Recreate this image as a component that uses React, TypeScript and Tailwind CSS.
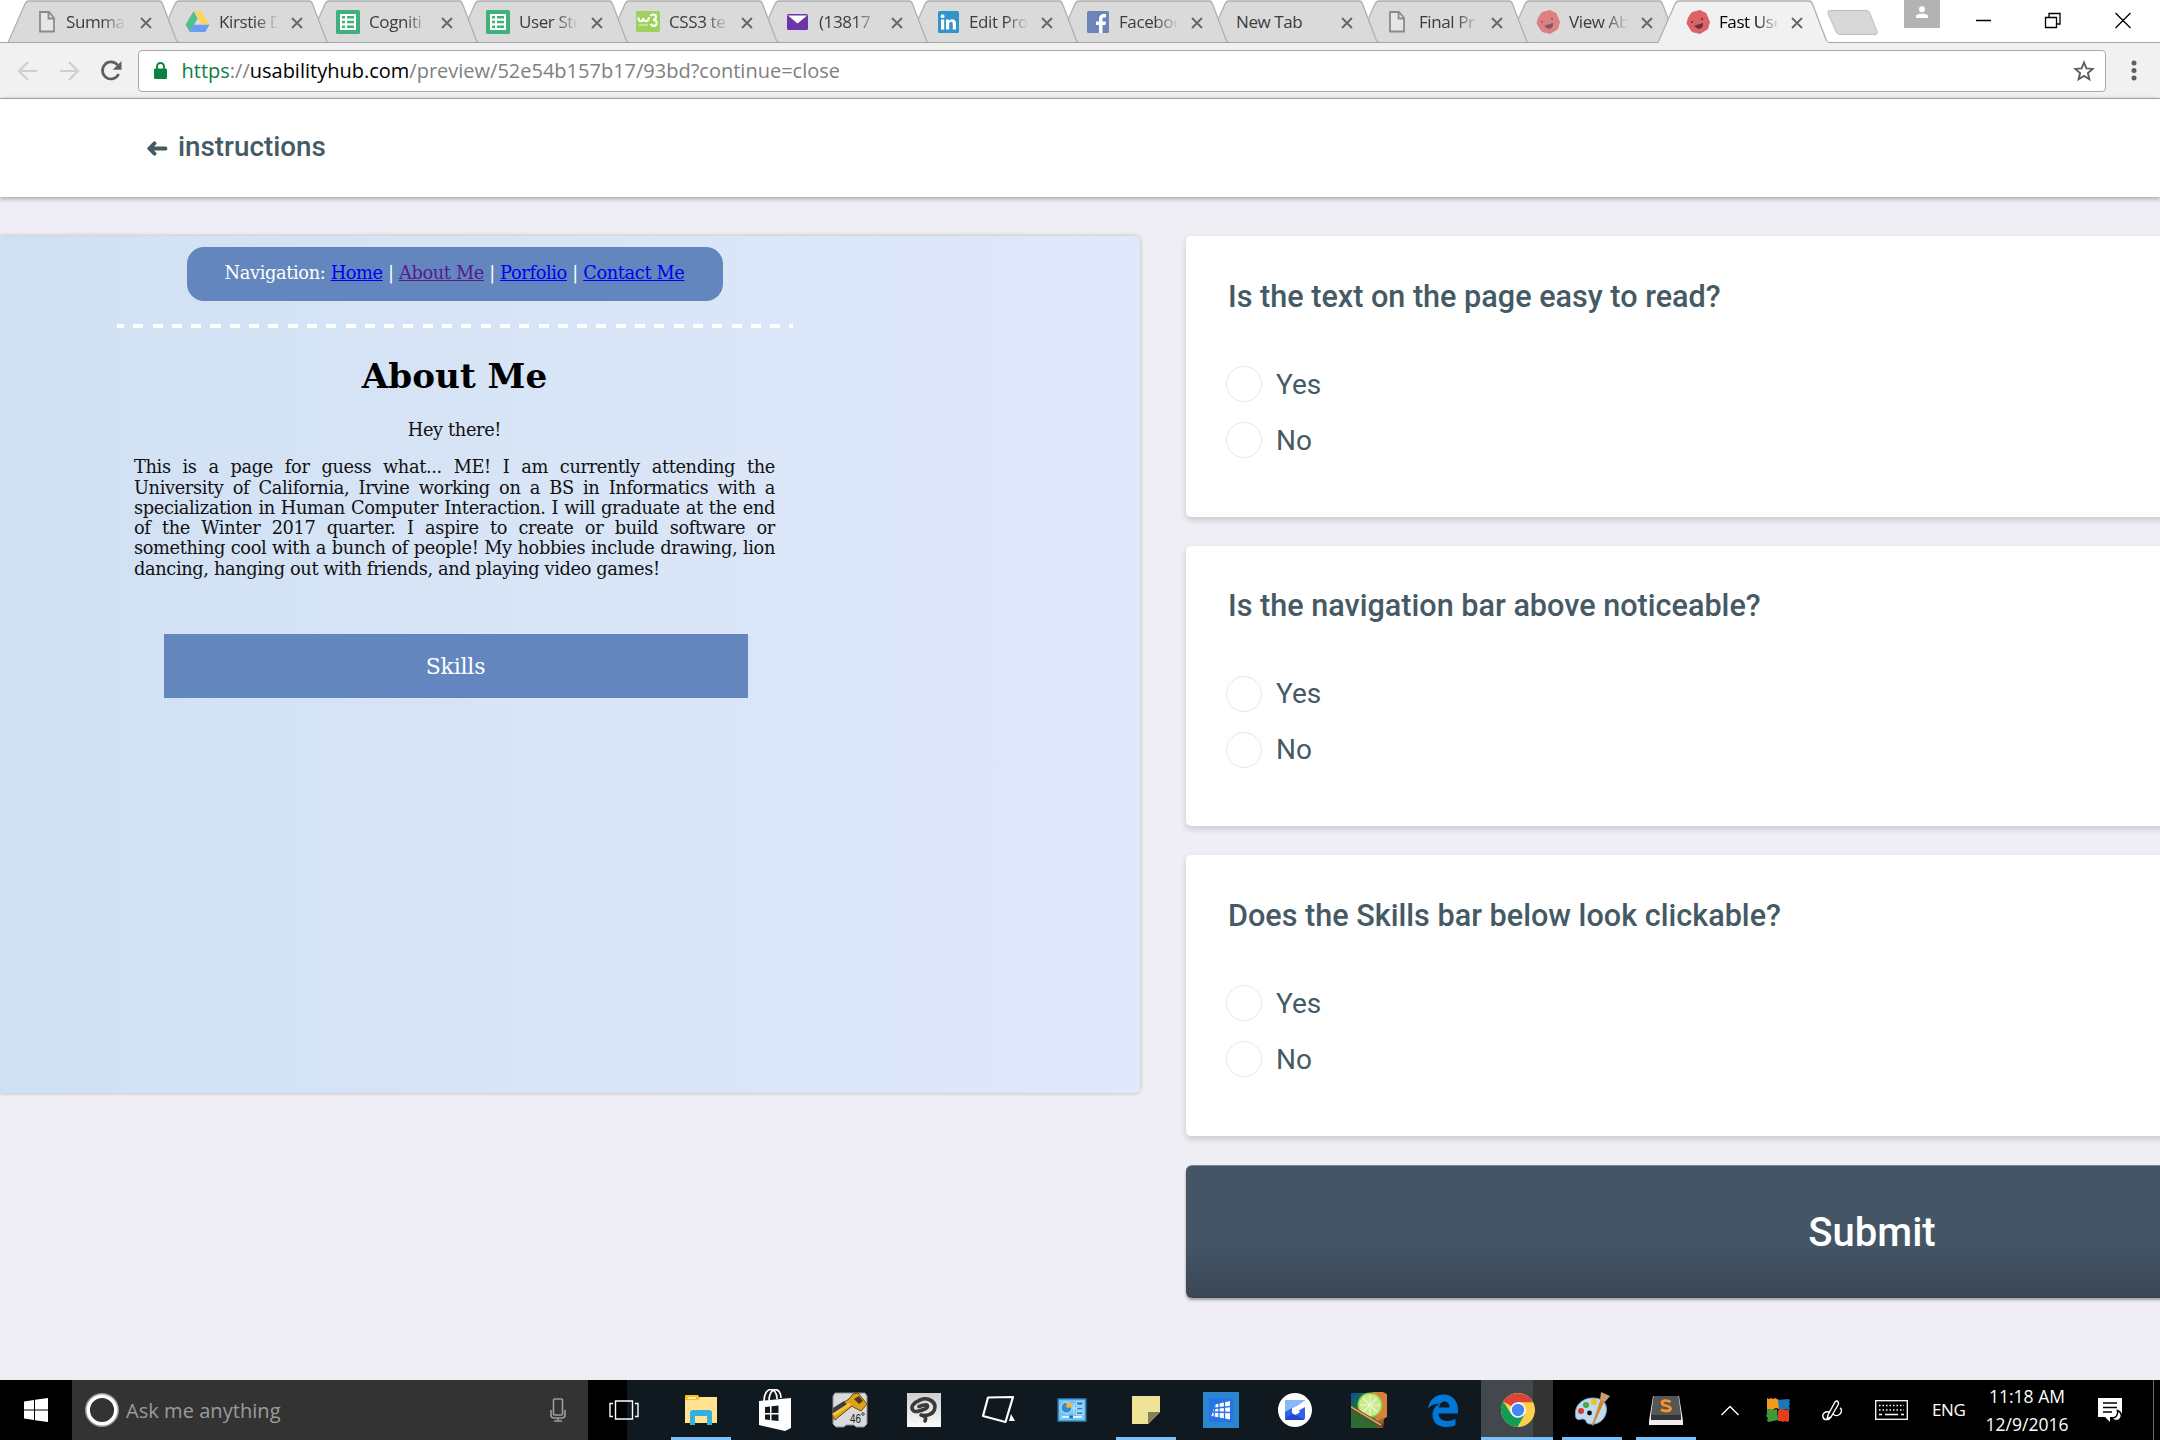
import React from "react";

type Tab = { title: string; icon?: React.ReactNode; dim?: boolean };

const FileIcon = () => (
  <svg className="-ml-[3px]" width="18" height="24" viewBox="0 0 18 24" fill="none" stroke="#8a8a8a" strokeWidth="1.800">
    <path d="M2 2h9l5 6v13.500H2z" fill="#e6e6e6" />
    <path d="M10.500 2v6.500H16" />
  </svg>
);
const DriveIcon = () => (
  <svg className="-ml-[2px]" width="25" height="23" viewBox="0 0 26 24">
    <path d="M9 1 0.500 15.500 5 23 13.200 8.500z" fill="#4fc08d" />
    <path d="M9 1h8l8.500 14.500h-8.200z" fill="#fdd464" />
    <path d="M5 23 9 15.500h16.500L21 23z" fill="#6b9cf4" />
  </svg>
);
const SheetIcon = () => (
  <svg width="24" height="24" viewBox="0 0 24 24">
    <rect width="24" height="24" rx="1.500" fill="#3fb27c" />
    <path d="M4 4h16v16H4z" fill="#fff" />
    <path d="M6 6h3v2.500H6zM11 6h7v2.500h-7zM6 10.700h3v2.500H6zM11 10.700h7v2.500h-7zM6 15.400h3v2.500H6zM11 15.400h7v2.500h-7z" fill="#3fb27c" />
  </svg>
);
const W3Icon = () => (
  <svg width="24" height="21" viewBox="0 0 24 21">
    <rect width="24" height="21" rx="1.500" fill="#9ed15d" />
    <path d="M2.500 6.500c0 5 4.500 5 4.700 .5 .3 4.500 5.300 4.500 5.800-1M14.500 5c2-2.500 6-1.500 5.500 1.200-.3 1.800-1.800 2.500-3 2.500 2.500 0 4 1.500 3.600 3.800-.6 3-4.600 3.200-6 .5" fill="none" stroke="#fff" strokeWidth="2.100" />
    <path d="M3 14h9" stroke="#d8efbf" strokeWidth="1.200" />
  </svg>
);
const MailIcon = () => (
  <svg className="-ml-[2px]" width="21" height="16" viewBox="0 0 21 16">
    <rect width="21" height="16" rx="1.500" fill="#6b34a8" />
    <path d="M1 1.500h19l-9.500 8z" fill="#fff" />
  </svg>
);
const LinkedInIcon = () => (
  <svg width="21" height="22" viewBox="0 0 21 22">
    <rect width="21" height="22" rx="1.500" fill="#3394c8" />
    <path d="M3 8.500h3.200V18.500H3zM8 8.500h3v1.400c1.700-2.500 7-2.200 7 2.600v6h-3.200v-5.300c0-3.200-3.600-3-3.600 0v5.300H8z" fill="#fff" />
    <circle cx="4.600" cy="5.200" r="1.900" fill="#fff" />
  </svg>
);
const FacebookIcon = () => (
  <svg width="22" height="22" viewBox="0 0 22 22">
    <rect width="22" height="22" rx="1.500" fill="#6d84b9" />
    <path d="M12 22v-8H9v-3.500h3V8c0-3.500 2-5 5-5h2v3.500h-1.500c-1.500 0-2 .6-2 1.800v2.200H19l-.6 3.500h-2.900v8z" fill="#fff" />
  </svg>
);
const FaceIcon = () => (
  <svg width="24" height="24" viewBox="0 0 24 24">
    <path d="M6 2.500 14 .5l6 3 3.500 8.500-2 7-7.500 4.500-8-2-5-8 1.500-6z" fill="#dd6266" stroke="#dd6266" strokeLinejoin="round" />
    <circle cx="6" cy="12" r="1" fill="#5d2c35" />
    <circle cx="16" cy="9" r="1" fill="#5d2c35" />
    <path d="M8.500 15.500l8.500-2.500c.5 3-1 5.500-3.500 5.800-2.300.2-4-1.200-5-3.300z" fill="#6b3038" />
  </svg>
);

const tabs: Tab[] = [
  { title: "Summa", icon: <FileIcon /> },
  { title: "Kirstie D", icon: <DriveIcon /> },
  { title: "Cogniti", icon: <SheetIcon /> },
  { title: "User Sto", icon: <SheetIcon /> },
  { title: "CSS3 te", icon: <W3Icon /> },
  { title: "(13817", icon: <MailIcon /> },
  { title: "Edit Pro", icon: <LinkedInIcon /> },
  { title: "Faceboo", icon: <FacebookIcon /> },
  { title: "New Tab" },
  { title: "Final Pr", icon: <FileIcon /> },
  { title: "View Ab", icon: <FaceIcon />, dim: true },
  { title: "Fast Use", icon: <FaceIcon /> },
];

function BrowserTab({ tab, active, layer }: { tab: Tab; active: boolean; layer: number }) {
  return (
    <div className="relative flex h-[43px] w-[150px] shrink-0 items-center" style={{ zIndex: layer }}>
      <svg className="absolute -left-3 top-0" width="176" height="43" viewBox="0 0 176 43">
        <path
          d="M0 42.500 L17 4 Q18.500 1 21 1 H151 Q153.500 1 154.500 4 L168 39.500 Q169 42.500 171 42.500"
          fill={active ? "#f1f1f1" : "#dadada"}
          stroke="#b0b0b0"
          strokeWidth="1.300"
        />
        <path d={active ? "M1 42.500H170" : "M0 42.500H171"} stroke={active ? "#f1f1f1" : "#a6a6a6"} strokeWidth={active ? 2 : 1} />
      </svg>
      <div className="relative flex h-full w-full items-center">
        {tab.icon && (
          <div className={`flex w-[49px] justify-center pl-[7px] ${tab.dim ? "opacity-75" : ""}`}>{tab.icon}</div>
        )}
        <div
          className={`whitespace-nowrap text-[17px] leading-[24px] tracking-[-0.4px] ${
            active ? "text-black" : "text-[#3c3c3c]"
          } ${
            tab.icon
              ? "w-[58px] [mask-image:linear-gradient(to_right,#000_36px,transparent_60px)] [mask-repeat:no-repeat]"
              : "ml-4 w-[91px]"
          } ${layer === 12 ? "-ml-[3px] mr-[2px]" : ""}`}
        >
          {tab.title}
        </div>
        <svg className="ml-[13.500px] mt-[2px]" width="12" height="12" viewBox="0 0 12 12" stroke="#666" strokeWidth="1.800">
          <path d="M1 1l10 10M11 1L1 11" />
        </svg>
      </div>
    </div>
  );
}

function TabStrip() {
  return (
    <div className="relative flex h-[43px] border-b border-[#a6a6a6] bg-white pl-[20px]">
      {tabs.map((t, i) => (
        <BrowserTab key={i} tab={t} active={i === tabs.length - 1} layer={i === tabs.length - 1 ? 20 : 12 - i} />
      ))}
      <svg className="ml-[6px] mt-[9px] shrink-0" width="54" height="27" viewBox="0 0 54 27">
        <path d="M4 1.500H40q3 0 4 3l7 18q1 3-2 3H14q-3 0-4-3L2 4.500q-1-3 2-3z" fill="#d8d8d8" stroke="#bdbdbd" />
      </svg>
      <div className="ml-[24px] flex h-[28px] w-[36px] shrink-0 justify-center bg-[#b3b3b3] pt-[6px]">
        <svg width="12" height="13" viewBox="0 0 12 13" fill="#fff">
          <circle cx="6" cy="3.200" r="3" />
          <path d="M0 12V9.500C2 7 10 7 12 9.500V12z" />
        </svg>
      </div>
      <svg className="ml-[36px] mt-[12px] shrink-0" width="157" height="18" viewBox="0 0 157 18" fill="none" stroke="#000" strokeWidth="1.300">
        <path d="M0 8.500H15M69.500 5.500h11v10h-11zM73 5V1.500h11v10.500h-3M139.500 1l15 15M154.500 1l-15 15" />
      </svg>
    </div>
  );
}

function Toolbar() {
  return (
    <div className="flex h-[56px] items-center border-b border-[#b4b4b4] bg-[#f1f1f1] pl-[17px]">
      <svg width="21" height="20" viewBox="0 0 21 20" fill="none" stroke="#cfcfcf" strokeWidth="2.200">
        <path d="M20 10H2M11 1L2 10l9 9" />
      </svg>
      <svg className="ml-[21px]" width="21" height="20" viewBox="0 0 21 20" fill="none" stroke="#cfcfcf" strokeWidth="2.200">
        <path d="M1 10H19M10 1l9 9-9 9" />
      </svg>
      <svg className="ml-[20px]" width="23" height="22" viewBox="0 0 23 22" fill="none">
        <path d="M17.500 5A8.500 8.500 0 1 0 18.700 14" stroke="#5e5e5e" strokeWidth="2.700" />
        <path d="M21.500 1v8.800h-8.800z" fill="#5e5e5e" />
      </svg>
      <div className="ml-[15px] flex h-[42px] w-[1968px] items-center rounded-[4px] border border-[#a9a9a9] bg-white pl-[15px] pr-[10px]">
        <svg width="13" height="18" viewBox="0 0 13 18">
          <rect y="6.500" width="13" height="10.500" rx="1.200" fill="#0b8043" />
          <path d="M3 7V4.500a3.500 3.500 0 0 1 7 0V7" fill="none" stroke="#0b8043" strokeWidth="1.900" />
        </svg>
        <div className="ml-[14.500px] whitespace-nowrap text-[20px] leading-[28px] text-[#808080]">
          <span className="text-[#0b8043]">https</span>://<span className="text-black">usabilityhub.com</span>
          /preview/52e54b157b17/93bd?continue=close
        </div>
        <svg className="ml-auto" width="22" height="22" viewBox="0 0 22 22" fill="none" stroke="#5e5e5e" strokeWidth="1.900">
          <path d="M11 2.500l2.400 5.900 6.300.5-4.800 4.100 1.500 6.200L11 15.900l-5.400 3.300 1.500-6.200L2.300 8.900l6.300-.5z" />
        </svg>
      </div>
      <svg className="ml-[25px]" width="6" height="21" viewBox="0 0 6 21" fill="#5e5e5e">
        <circle cx="3" cy="3" r="2.500" />
        <circle cx="3" cy="10.500" r="2.500" />
        <circle cx="3" cy="18" r="2.500" />
      </svg>
    </div>
  );
}

function AboutPage() {
  return (
    <div className="h-[857px] w-[1140px] shrink-0 rounded-r-[5px] bg-linear-to-r from-[#d0e0f3] via-[#d8e5f7] to-[#e0e8fb] pt-[11px] font-['DejaVu_Serif',serif] text-[17.800px] leading-[20.3px] tracking-[-0.370px] text-[#111] shadow-[0_0_4px_rgba(0,0,0,0.25)]">
      <div className="flex w-[909px] flex-col items-center">
        <div className="flex h-[54px] w-[536px] justify-center rounded-[17px] bg-[#6486be] pt-[15.500px] text-white">
          <span className="whitespace-nowrap">
            Navigation: <a className="text-[#0000ee] underline">Home</a> | <a className="text-[#551a8b] underline">About Me</a> |{" "}
            <a className="text-[#0000ee] underline">Porfolio</a> | <a className="text-[#0000ee] underline">Contact Me</a>
          </span>
        </div>
        <div className="mt-[23px] h-[3.500px] w-[676px] bg-[repeating-linear-gradient(to_right,#fff_0,#fff_10px,transparent_10px,transparent_19.3px)] bg-[position:-3px_0]" />
        <h1 className="mt-[28px] text-[34.2px] font-bold leading-[40px] tracking-normal text-black">About Me</h1>
        <p className="mt-[24px]">Hey there!</p>
        <p className="mt-[17.500px] w-[641px] text-justify">
          This is a page for guess what... ME! I am currently attending the University of California, Irvine working on a BS in
          Informatics with a specialization in Human Computer Interaction. I will graduate at the end of the Winter 2017 quarter. I
          aspire to create or build software or something cool with a bunch of people! My hobbies include drawing, lion dancing,
          hanging out with friends, and playing video games!
        </p>
        <div className="ml-[2px] mt-[55px] flex h-[64px] w-[584px] items-center justify-center bg-[#6486be] pt-[2px] text-[22px] tracking-[-0.200px] text-white">
          Skills
        </div>
      </div>
    </div>
  );
}

function Question({ text }: { text: string }) {
  return (
    <div className="h-[280.500px] rounded-[5px] bg-white pl-[40px] pt-[40.500px] shadow-[0_3px_6px_rgba(0,0,0,0.16)]">
      <h2 className="whitespace-nowrap pl-[2px] text-[30.600px] font-medium leading-[40px]">{text}</h2>
      <div className="mt-[49.500px] flex flex-col gap-[20px]">
        {["Yes", "No"].map((o) => (
          <label key={o} className="flex h-[36px] items-center gap-[14px] text-[28px] leading-[36px]">
            <span className="h-[36px] w-[36px] rounded-full border-[1.500px] border-[#e2e8ee]" />
            <span className="pt-[1px]">{o}</span>
          </label>
        ))}
      </div>
    </div>
  );
}

const ExplorerIcon = () => (
  <svg width="32" height="30" viewBox="0 0 32 30">
    <path d="M0 1q0-1 1-1h12l2 3v3H0z" fill="#fbbc24" />
    <path d="M3 3h8" stroke="#fff" strokeWidth="1.400" />
    <path d="M0 5h13l2-3h17v26H0z" fill="#ffe391" />
    <path d="M5 30V18q0-3 3-3h16q3 0 3 3v12h-5v-9H10v9z" fill="#35aee2" />
  </svg>
);
const StoreIcon = () => (
  <svg width="34" height="42" viewBox="0 0 34 42">
    <path d="M1 12l32-3v30l-6 3L1 36z" fill="#fff" />
    <path d="M6 12C6-3 19-3 19 10M11 11C12-3 23-2 23 9" fill="none" stroke="#fff" strokeWidth="1.700" />
    <path d="M7 18l5-.5v6.500H7zM13.500 17.200l7-.8V24h-7zM7 25.500h5V31l-5-.6zM13.500 25.500h7v6.600l-7-.9z" fill="#101820" />
  </svg>
);
const RulerIcon = () => (
  <svg width="36" height="36" viewBox="0 0 36 36">
    <path d="M3 1h30l2 3v28l-3 3h-8l-2-2h-8l-2 2H4l-3-3V4z" fill="#d9dadd" stroke="#8d8f93" />
    <path d="M1 17L17 7l4-5 5-1 9 11-6 7-6-3-3-2L3 28l-2-3z" fill="#e0a21b" stroke="#6e4a05" />
    <path d="M1 16l11-7 4 5L1 24z" fill="#3b3d40" />
    <path d="M1 23L18 12" stroke="#f7c545" strokeWidth="3" />
    <path d="M22 7l5-3 4 5-4 3z" fill="#4a3b1a" />
    <text x="18" y="31" fontSize="12" fontFamily="Liberation Sans, sans-serif" fill="#222" textLength="11" lengthAdjust="spacingAndGlyphs">46</text>
    <circle cx="31" cy="22" r="1.300" fill="none" stroke="#222" strokeWidth=".8" />
  </svg>
);
const ClipIcon = () => (
  <svg width="34" height="34" viewBox="0 0 34 34">
    <defs>
      <linearGradient id="clip" x2="0" y2="1">
        <stop stopColor="#cfcfcf" />
        <stop offset="1" stopColor="#fafafa" />
      </linearGradient>
    </defs>
    <rect width="34" height="34" fill="url(#clip)" />
    <path
      d="M5.500 12.500C10 7 17 4.500 22 6.500C31 10 29 20 21 22C18 22.800 15.500 22.500 14 22C17 23 20 24 18 28M5.500 12.500C3.500 17.500 8 19.500 12 18C16 17 21 15.500 20.500 13C20 11 16 12 12 13.500"
      fill="none"
      stroke="#3a3a3a"
      strokeWidth="3.600"
      strokeLinejoin="round"
      strokeLinecap="round"
    />
  </svg>
);
const TabletIcon = () => (
  <svg width="36" height="32" viewBox="0 0 36 32" fill="none" stroke="#fff" strokeWidth="2.200">
    <path d="M8 3.500l25-.5-7.500 25L3 22z" strokeLinejoin="round" />
    <path d="M31 20l4 7h-6z" fill="#fff" stroke="none" />
  </svg>
);
const PanelIcon = () => (
  <svg width="32" height="24" viewBox="0 0 32 26">
    <rect x="1" y="1" width="30" height="24" fill="#72c5f2" stroke="#2d7fb8" strokeWidth="1.500" />
    <circle cx="10" cy="10.500" r="6" fill="#2f8ed0" stroke="#d9f1ff" />
    <path d="M10 10.500v-6a6 6 0 0 1 6 6z" fill="#f9b233" />
    <path d="M21 4h7v4h-7zM21 10h7v3h-7zM21 15h7v3h-7zM17 11h4M18 6v11" fill="#2b86c5" stroke="#d9f1ff" strokeWidth=".9" />
    <path d="M5 20.500h22" stroke="#eaf8ff" strokeWidth="2" />
    <path d="M13 20.500h4" stroke="#1f6fae" strokeWidth="3" />
  </svg>
);
const NoteIcon = () => (
  <svg width="28" height="28" viewBox="0 0 28 28">
    <path d="M0 0h28v16L16 28H0z" fill="#efe397" />
    <path d="M16 28V16h12z" fill="#85805a" />
  </svg>
);
const TileIcon = () => (
  <svg width="36" height="36" viewBox="0 0 36 36">
    <rect width="36" height="36" fill="#2b86cf" />
    <rect x="6" y="6" width="24" height="24" fill="#2673e8" />
    <path d="M12 12.500L27 9v18.500L8.500 24z" fill="#fff" />
    <path d="M9 20l18 .5M10 16.500l17-2M16 11v15M21.500 10v17M12 12l-1 13" stroke="#2673e8" strokeWidth="1.300" />
  </svg>
);
const GIcon = () => (
  <svg width="34" height="34" viewBox="0 0 34 34">
    <circle cx="17" cy="17" r="17" fill="#fff" />
    <path d="M7 9q0-2 2-2h18l-7 5-6 3v5l3 2 4-2 1-2h-2l7-4v11q0 2-2 2H9q-2 0-2-2z" fill="#2f62e6" />
    <path d="M7 9q0-2 2-2h18l-7 5-6 3-7 4z" fill="#86b8fa" />
    <path d="M7 26l7-5 3 1 9 4.500-1 .5H9q-2 0-2-1z" fill="#1c46d6" />
  </svg>
);
const LimeIcon = () => (
  <svg width="36" height="36" viewBox="0 0 36 36">
    <defs>
      <linearGradient id="lime" x2="1" y2="1">
        <stop stopColor="#134a9c" />
        <stop offset=".3" stopColor="#0e7c36" />
        <stop offset=".6" stopColor="#65a92a" />
        <stop offset="1" stopColor="#c22f16" />
      </linearGradient>
    </defs>
    <path d="M0 1h24a15 15 0 0 1 9 26l-1 9H0z" fill="url(#lime)" />
    <path d="M20 1a14 14 0 0 1 14 25l-9 3z" fill="#d9803a" />
    <circle cx="19" cy="13" r="12.500" fill="#8fce4c" />
    <circle cx="19" cy="13" r="11" fill="#c9e98a" />
    <path d="M19 13V3M19 13l7-7M19 13h10M19 13l7 7M19 13v10M19 13l-7 7M19 13H9M19 13l-7-7" stroke="#eef8d0" strokeWidth="1.100" />
    <path d="M0 13l33 20-3 3L0 18z" fill="#6e4422" />
    <path d="M0 15l20 12 10 6" stroke="#d6a97d" strokeWidth="1.500" fill="none" />
    <path d="M0 18l28 16-2 2H0z" fill="#2f6a2e" />
  </svg>
);
const EdgeIcon = () => (
  <svg width="30" height="33" viewBox="0 0 30 33">
    <path
      d="M0 14.500C1.500 5 8 .5 15.500.5 24 .5 30 6.500 30 16v3.500H10.500c0 5 4 7.500 9 7.500 3 0 5.500-.8 8-2.200v6.500C25 32.500 21.500 33 18 33 9.500 33 4.500 28 4.500 21c0-5 2.500-9 7-11.300C6.500 9.500 2.500 11 0 14.500zM11 13.500h10.500c0-4-2-6-5-6S11.500 10 11 13.500z"
      fill="#0078d7"
    />
  </svg>
);
const ChromeIcon = () => (
  <svg width="34" height="34" viewBox="0 0 34 34">
    <circle cx="17" cy="17" r="17" fill="#fdd04b" />
    <path d="M17 17L2.300 8.500A17 17 0 0 1 32 9.300H17z" fill="#db4437" />
    <path d="M2.300 8.500A17 17 0 0 0 16.500 34l7.400-13L10.200 21z" fill="#109d58" />
    <circle cx="17" cy="17" r="7.800" fill="#fff" />
    <circle cx="17" cy="17" r="6.200" fill="#4285f4" />
  </svg>
);
const PaintIcon = () => (
  <svg width="36" height="36" viewBox="0 0 36 36">
    <path d="M2 26C-1 14 8 6 19 6s15 7 13 15-9 12-16 11c-5 0-3-5-7-5-3 0-5 2-7-1z" fill="#bddcf1" stroke="#7ea6c4" />
    <circle cx="15.500" cy="21" r="2.400" fill="#0a0a0a" />
    <circle cx="7" cy="19" r="3" fill="#dc3a2e" />
    <circle cx="12" cy="13" r="3" fill="#49a942" />
    <circle cx="20" cy="10" r="3.200" fill="#f6c02c" />
    <path d="M31 8L19 34l-1-1L27 6z" fill="#d9842c" />
    <path d="M27 0l9 4-5 6-5-2z" fill="#c79d78" />
  </svg>
);
const SublimeIcon = () => (
  <svg width="34" height="32" viewBox="0 0 34 32">
    <path d="M4 2h26l4 25v4H0v-4z" fill="#eee" />
    <path d="M4.500 2h25l2.500 19H2z" fill="#565656" />
    <path d="M2 21h30v5H2z" fill="#333" />
    <path d="M21.500 8c-3-2-8.500-2-8.500 1 0 3.500 8.500 2 8.500 5.500 0 3-6 3.200-9.500 1" fill="none" stroke="#fb9226" strokeWidth="2.800" />
  </svg>
);

const apps: { icon: React.ReactNode; running?: boolean; active?: boolean }[] = [
  { icon: <ExplorerIcon />, running: true },
  { icon: <StoreIcon /> },
  { icon: <RulerIcon /> },
  { icon: <ClipIcon /> },
  { icon: <TabletIcon /> },
  { icon: <PanelIcon /> },
  { icon: <NoteIcon />, running: true },
  { icon: <TileIcon /> },
  { icon: <GIcon /> },
  { icon: <LimeIcon /> },
  { icon: <EdgeIcon /> },
  { icon: <ChromeIcon />, active: true },
  { icon: <PaintIcon />, running: true },
  { icon: <SublimeIcon />, running: true },
];

function Taskbar() {
  return (
    <div className="flex h-[60px] shrink-0 bg-[linear-gradient(to_right,#000_627px,#101820_627px,#101820_1533px,#000_1533px)] text-white">
      <div className="flex w-[72px] items-center justify-center">
        <svg width="24" height="24" viewBox="0 0 24 24" fill="#fff">
          <path d="M0 3.500L10 2v9.500H0zM11 1.800L24 0v11.500H11zM0 12.500h10V22L0 20.500zM11 12.500h13V24L11 22.200z" />
        </svg>
      </div>
      <div className="flex w-[516px] items-center bg-[#333] pl-[13px] pr-[22px]">
        <svg width="34" height="34" viewBox="0 0 34 34" fill="none">
          <circle cx="17" cy="17" r="16" stroke="#999" strokeWidth="2" />
          <circle cx="17" cy="17" r="13.800" stroke="#fff" strokeWidth="3.500" />
        </svg>
        <span className="ml-[7px] mt-[2px] text-[20px] leading-[28px] tracking-[0.050px] text-[#9b9b9b]">Ask me anything</span>
        <svg className="ml-auto" width="16" height="24" viewBox="0 0 16 24" fill="none" stroke="#9d9d9d" strokeWidth="1.600">
          <rect x="3.500" y="1" width="9" height="16" rx="1" />
          <path d="M1 12v5q0 3 3 3h8q3 0 3-3v-5M8 20v3M4 23h8" />
        </svg>
      </div>
      <div className="flex w-[76px] items-center pl-[21px]">
        <svg width="30" height="20" viewBox="0 0 30 20" fill="none" stroke="#fff" strokeWidth="1.400">
          <path d="M6.500 1h17v18h-17zM4 3.500H1v13h3M26 3.500h3v13h-3" />
        </svg>
      </div>
      <div className="flex w-[1039px]">
        {apps.map((a, i) => (
          <div key={i} className="relative flex flex-1 items-center justify-center">
            {a.active && (
              <div className="absolute left-[1px] top-0 h-full w-[72px] border-b-[3px] border-[#7cc0fa] bg-[linear-gradient(to_right,#42484c_52px,#333_52px)]" />
            )}
            <div className="relative">{a.icon}</div>
            {a.running && <div className="absolute bottom-0 left-[7px] h-[3px] w-[60px] bg-[#7cc0fa]" />}
          </div>
        ))}
      </div>
      <div className="flex flex-1 items-center pl-[18px]">
        <svg width="18" height="11" viewBox="0 0 18 11" fill="none" stroke="#fff" strokeWidth="1.400">
          <path d="M.5 10L9 1.500l8.500 8.500" />
        </svg>
        <svg className="ml-[27px]" width="24" height="24" viewBox="0 0 24 24">
          <path d="M1 0l2 1 2-1 2 1 2-1 4 2v9l-3-1-4 2-5-1z" fill="#f29a1f" />
          <path d="M12 2l10-1 2 1-1 2 1 2-1 2 1 4-4-1-7 1z" fill="#1b78b8" />
          <path d="M1 11l5 1 5-1 1 11-10 2-1-2 1-2-2-2 1-2z" fill="#3d9a3a" />
          <path d="M12 12l4-1 7 1v11l-2 1-2-1-2 1-2-1-3 0z" fill="#e0401f" />
        </svg>
        <svg className="ml-[32px]" width="21" height="21" viewBox="0 0 21 21" fill="none" stroke="#fff" strokeWidth="1.400">
          <path d="M6 15L13 2q2-2 3 0 1 1 0 3L9 17l-4 2zM7 12c-4-1-7 2-6 5 1 4 6 3 8 0M11 14c2 2 5 2 7 0s2-5 0-6" />
        </svg>
        <svg className="ml-[32px]" width="33" height="20" viewBox="0 0 33 20" fill="none" stroke="#fff" strokeWidth="1.300">
          <rect x=".7" y=".7" width="31.600" height="18.600" />
          <path d="M4 5.500h25M4 10h25" strokeDasharray="1.500 2" strokeWidth="1.600" />
          <path d="M4 14.500h3M10 14.500h13M26 14.500h3" />
        </svg>
        <span className="ml-[24px] w-[33px] whitespace-nowrap text-[17px] leading-[24px] tracking-[-0.4px]">ENG</span>
        <div className="ml-[16px] flex w-[92px] flex-col items-center whitespace-nowrap text-[17.500px] leading-[28px]">
          <span>11:18 AM</span>
          <span>12/9/2016</span>
        </div>
        <svg className="ml-[25px]" width="25" height="25" viewBox="0 0 25 25">
          <path d="M0 0h24v19H12v5l-5-5H0z" fill="#fff" />
          <path d="M5 5h14M5 9.500h14M5 14h9" stroke="#000" strokeWidth="1.300" />
          <path d="M19.500 12.500c4.500 2 5 6.500 2 9-3 2-6.500 1-7.500-1.500 4 .5 6.500-3.500 5.500-7.500z" fill="#fff" stroke="#000" strokeWidth="1.500" />
        </svg>
        <div className="ml-auto mr-[6px] h-full w-[1px] bg-[#6b6b6b]" />
      </div>
    </div>
  );
}

export default function App() {
  return (
    <div className="flex h-[1440px] w-[2160px] flex-col overflow-hidden bg-[#efeef4] font-['Open_Sans',sans-serif]">
      <TabStrip />
      <Toolbar />
      <div className="flex min-h-0 flex-1 flex-col font-['Roboto',sans-serif] text-[#455a64]">
        <header className="flex h-[98px] shrink-0 items-center bg-white pl-[146.500px] shadow-[0_1px_5px_rgba(0,0,0,0.4)]">
          <svg className="mt-[1px]" width="21" height="15" viewBox="0 0 21 15" fill="none" stroke="#455a64" strokeWidth="3.800" strokeLinecap="round" strokeLinejoin="round">
            <path d="M18.500 7.500H3M7.500 2.300L2.200 7.500l5.300 5.200" />
          </svg>
          <span className="-mt-[3px] ml-[10.500px] text-[27.800px] font-medium leading-[36px]">instructions</span>
        </header>
        <main className="flex gap-[46px] pt-[39px]">
          <AboutPage />
          <div className="flex w-[1372px] shrink-0 flex-col gap-[29.200px]">
            <Question text="Is the text on the page easy to read?" />
            <Question text="Is the navigation bar above noticeable?" />
            <Question text="Does the Skills bar below look clickable?" />
            <button className="h-[133px] rounded-[6px] border-t border-[#7b8793] bg-linear-to-b from-[#445565] from-60% to-[#3a4656] pt-[1px] text-[40px] font-medium leading-[50px] text-white shadow-[0_2px_3px_rgba(0,0,0,0.35)]">
              Submit
            </button>
          </div>
        </main>
      </div>
      <Taskbar />
    </div>
  );
}
